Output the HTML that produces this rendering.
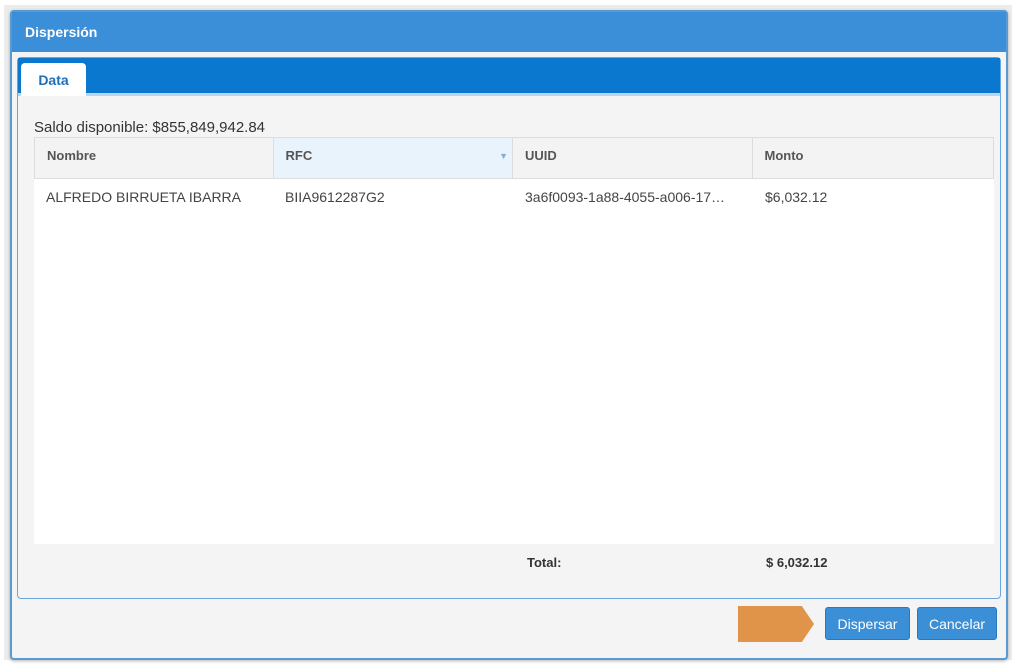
<!DOCTYPE html>
<html><head><style>
*{margin:0;padding:0;box-sizing:border-box}
body{width:1024px;height:670px;background:#fff;font-family:"Liberation Sans",Arial,sans-serif;position:relative;overflow:hidden}
.bg{position:absolute;left:4px;top:5px;width:1008px;height:655px;background:#ececec}
.bgtext{position:absolute;left:106px;top:646px;font-size:14px;color:#666}
.dlg{position:absolute;left:10px;top:10px;width:998px;height:650px;background:#f4f4f4;border:2px solid #5a9ad3;border-radius:4px;box-shadow:0 1px 3px rgba(0,0,0,.3)}
.title{height:40px;background:#3b8fd8;color:#fff;font-weight:bold;font-size:14px;line-height:40px;padding-left:13px}
.tabp{position:absolute;left:5px;top:45px;width:984px;height:542px;border:1px solid #6aa6dc;border-radius:4px;background:#f4f4f4}
.tabh{height:38px;background:#0b78cf;position:relative;border-bottom:3px solid #b8d6f0}
.tab{position:absolute;left:3px;top:5px;width:65px;height:33px;background:#fff;border-radius:4px 4px 0 0;color:#1d6fb8;font-weight:bold;font-size:14px;text-align:center;line-height:34px}
.saldo{position:absolute;left:16px;top:61px;font-size:15px;color:#333}
.grid{position:absolute;left:16px;top:79px;width:960px;height:407px;background:#fff}
.hd{height:42px;background:#f3f3f3;border:1px solid #ddd;display:flex}
.hd div{font-weight:bold;font-size:13px;color:#555;line-height:36px;padding-left:12px;border-right:1px solid #ddd;position:relative}
.row{display:flex;height:38px;font-size:14px;color:#444;line-height:36px}
.row div{padding-left:12px}
.tot{position:absolute;top:497px;font-weight:bold;font-size:13px;color:#333}
.btn{position:absolute;top:595px;height:33px;background:#3b8fd6;color:#fff;font-size:14px;line-height:33px;text-align:center;border-radius:3px;border:1px solid #2c78bb}
.arrow{position:absolute;left:726px;top:594px;width:76px;height:36px;background:#df944a;clip-path:polygon(0 0,84% 0,100% 50%,84% 100%,0 100%)}
</style></head><body>
<div class="bg"></div>
<div class="bgtext">ALFREDO BIRRUETA IBARRA</div>
<div class="dlg">
<div class="title">Dispersión</div>
<div class="tabp">
<div class="tabh"><div class="tab">Data</div></div>
<div class="saldo">Saldo disponible: $855,849,942.84</div>
<div class="grid">
<div class="hd">
<div style="width:239px">Nombre</div>
<div style="width:240px;background:#e9f3fc">RFC<span style="position:absolute;right:4px;top:0;color:#7ab2e0;font-size:9px">▼</span></div>
<div style="width:240px">UUID</div>
<div style="width:241px;border-right:none">Monto</div>
</div>
<div class="row"><div style="width:239px">ALFREDO BIRRUETA IBARRA</div><div style="width:240px">BIIA9612287G2</div><div style="width:240px">3a6f0093-1a88-4055-a006-17…</div><div>$6,032.12</div></div>
</div>
<div class="tot" style="left:509px">Total:</div>
<div class="tot" style="left:748px">$ 6,032.12</div>
</div>
<div class="arrow"></div>
<div class="btn" style="left:813px;width:85px">Dispersar</div>
<div class="btn" style="left:905px;width:80px">Cancelar</div>
</div>
</body></html>
